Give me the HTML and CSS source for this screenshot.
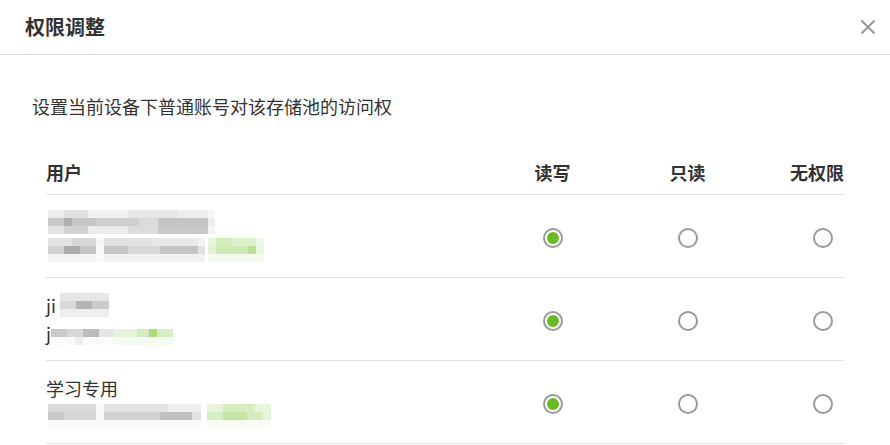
FILE: index.html
```html
<!DOCTYPE html>
<html lang="zh-CN">
<head>
  <meta charset="UTF-8">
  <title>权限调整</title>
  <link rel="stylesheet" href="styles.css">
</head>
<body>
  <div class="dialog">
    <div class="dialog-header">
      <h2 class="dialog-title">权限调整</h2>
      <button class="close-btn" aria-label="关闭">
        <svg width="16" height="16" viewBox="0 0 16 16">
          <path d="M1.5 1.5 L14.5 14.5 M14.5 1.5 L1.5 14.5" stroke="#999" stroke-width="2" fill="none"/>
        </svg>
      </button>
    </div>

    <div class="dialog-body">
      <p class="desc">设置当前设备下普通账号对该存储池的访问权</p>

      <div class="perm-table">
        <div class="perm-row perm-head">
          <div class="col-user">用户</div>
          <div class="col-opt">读写</div>
          <div class="col-opt">只读</div>
          <div class="col-opt col-last">无权限</div>
        </div>

        <div class="perm-row">
          <div class="col-user">
            <div class="user-line"><span class="mosaic m-name1"></span></div>
            <div class="user-line"><span class="mosaic m-acc1"></span><span class="mosaic m-green1"></span></div>
          </div>
          <div class="col-opt"><span class="radio checked"></span></div>
          <div class="col-opt"><span class="radio"></span></div>
          <div class="col-opt col-last"><span class="radio"></span></div>
        </div>

        <div class="perm-row">
          <div class="col-user">
            <div class="user-line">ji<span class="mosaic m-name2"></span></div>
            <div class="user-line">j<span class="mosaic m-acc2"></span><span class="mosaic m-green2"></span></div>
          </div>
          <div class="col-opt"><span class="radio checked"></span></div>
          <div class="col-opt"><span class="radio"></span></div>
          <div class="col-opt col-last"><span class="radio"></span></div>
        </div>

        <div class="perm-row">
          <div class="col-user">
            <div class="user-line">学习专用</div>
            <div class="user-line"><span class="mosaic m-acc3"></span><span class="mosaic m-green3"></span></div>
          </div>
          <div class="col-opt"><span class="radio checked"></span></div>
          <div class="col-opt"><span class="radio"></span></div>
          <div class="col-opt col-last"><span class="radio"></span></div>
        </div>
      </div>
    </div>
  </div>
</body>
</html>
```

FILE: styles.css
```css
body {
  margin: 0;
  background-color: #fff;
  color: #333;
  font-family: "Noto Sans CJK SC", "Noto Sans", sans-serif;
}

.dialog {
  width: 890px;
  height: 445px;
  overflow: hidden;
}

.dialog-header {
  height: 55px;
  border-bottom: 1px solid #e0e0e0;
  display: flex;
  align-items: center;
  justify-content: space-between;
  padding: 0 14px 0 25px;
  box-sizing: border-box;
}

.dialog-title {
  margin: 0;
  font-size: 20px;
  font-weight: bold;
  line-height: 28px;
  color: #333;
}

.close-btn {
  border: none;
  background: none;
  padding: 0;
  width: 16px;
  height: 16px;
  cursor: pointer;
}

.dialog-body {
  padding: 0 46px 0 32px;
}

.desc {
  margin: 39px 0 31px;
  font-size: 18px;
  line-height: 24px;
  color: #333;
}

.perm-table {
  margin-left: 14px;
}

.perm-row {
  display: grid;
  grid-template-columns: 1fr 135px 135px 89px;
  align-items: center;
  height: 82px;
  border-bottom: 1px solid #e0e0e0;
}

.perm-head {
  height: 45px;
  font-size: 18px;
  font-weight: bold;
  line-height: 24px;
}

.col-opt {
  text-align: center;
}

.col-last {
  text-align: right;
}

.col-last .radio {
  margin-right: 11px;
}

.col-user {
  font-size: 18px;
  line-height: 28px;
  color: #333;
}

.user-line {
  display: flex;
  align-items: center;
  height: 28px;
}

.radio {
  display: inline-block;
  width: 20px;
  height: 20px;
  border: 2px solid #9a9a9a;
  border-radius: 50%;
  box-sizing: border-box;
  vertical-align: middle;
  position: relative;
}

.radio.checked::after {
  content: "";
  position: absolute;
  left: 2px;
  top: 2px;
  width: 12px;
  height: 12px;
  border-radius: 50%;
  background-color: #67bd1d;
}

/* pixelated (hidden) account info */
.mosaic {
  display: inline-block;
  height: 24px;
  background-repeat: no-repeat;
  background-size: 100% 8px;
}

.m-name1 {
  width: 167px;
  margin-left: 2px;
  background-image:
    linear-gradient(to right, #ececec 0 16px, #e2e2e2 16px 40px, #f2f2f2 40px 80px, #e6e6e6 80px 130px, #ececec 130px 160px, #f7f7f7 160px),
    linear-gradient(to right, #c9c9c9 0 16px, #aeaeae 16px 24px, #c6c6c6 24px 48px, #cfcfcf 48px 90px, #dadada 90px 110px, #c4c4c4 110px 160px, #ececec 160px),
    linear-gradient(to right, #e2e2e2 0 16px, #d2d2d2 16px 40px, #ececec 40px 80px, #dcdcdc 80px 110px, #c8c8c8 110px 160px, #f4f4f4 160px);
  background-position: 0 0, 0 8px, 0 16px;
}

.m-acc1 {
  width: 157px;
  margin-left: 2px;
  background-image:
    linear-gradient(to right, #e4e4e4 0 24px, #d8d8d8 24px 48px, #f6f6f6 48px 56px, #e2e2e2 56px 104px, #e8e8e8 104px 150px, #f2f2f2 150px),
    linear-gradient(to right, #d2d2d2 0 16px, #ababab 16px 32px, #c4c4c4 32px 48px, #fafafa 48px 56px, #c6c6c6 56px 80px, #d8d8d8 80px 112px, #c4c4c4 112px 150px, #e2e2e2 150px),
    linear-gradient(to right, #f4f4f4 0 48px, #fafafa 48px 56px, #f2f2f2 56px 157px);
  background-position: 0 0, 0 8px, 0 16px;
}

.m-green1 {
  width: 56px;
  margin-left: 3px;
  background-image:
    linear-gradient(to right, #e8f5dd 0 8px, #d2edbb 8px 24px, #dcf0cb 24px 48px, #eef8e6 48px),
    linear-gradient(to right, #e2f2d5 0 8px, #cdeab4 8px 40px, #b9e196 40px 48px, #eaf6df 48px),
    linear-gradient(to right, #f4faee 0 56px);
  background-position: 0 0, 0 8px, 0 16px;
}

.m-name2 {
  width: 49px;
  margin-left: 4px;
  background-image:
    linear-gradient(to right, #e6e6e6 0 49px),
    linear-gradient(to right, #d8d8d8 0 16px, #b4b4b4 16px 32px, #cacaca 32px 49px),
    linear-gradient(to right, #eeeeee 0 49px);
  background-position: 0 0, 0 8px, 0 16px;
}

.m-acc2 {
  width: 62px;
  background-image:
    linear-gradient(to right, #fff 0 62px),
    linear-gradient(to right, #c9c9c9 0 16px, #d8d8d8 16px 32px, #bcbcbc 32px 48px, #e6e6e6 48px),
    linear-gradient(to right, #fafafa 0 24px, #eeeeee 24px 32px, #fafafa 32px);
  background-position: 0 0, 0 8px, 0 16px;
}

.m-green2 {
  width: 60px;
  background-image:
    linear-gradient(to right, #fff 0 60px),
    linear-gradient(to right, #e6f4da 0 24px, #d3ecbe 24px 36px, #acdb7e 36px 44px, #d8efc4 44px),
    linear-gradient(to right, #f6fbf1 0 60px);
  background-position: 0 0, 0 8px, 0 16px;
}

.m-acc3 {
  width: 153px;
  margin-left: 2px;
  background-image:
    linear-gradient(to right, #dadada 0 48px, #fafafa 48px 56px, #e4e4e4 56px 120px, #eeeeee 120px),
    linear-gradient(to right, #c9c9c9 0 16px, #d6d6d6 16px 48px, #fafafa 48px 56px, #d2d2d2 56px 112px, #c0c0c0 112px 144px, #e2e2e2 144px),
    linear-gradient(to right, #fafafa 0 153px);
  background-position: 0 0, 0 8px, 0 16px;
}

.m-green3 {
  width: 64px;
  margin-left: 6px;
  background-image:
    linear-gradient(to right, #e6f4da 0 16px, #d6eec2 16px 48px, #e8f5dd 48px),
    linear-gradient(to right, #d8efc4 0 16px, #c4e5a6 16px 40px, #d4ecbd 40px 56px, #e6f4da 56px),
    linear-gradient(to right, #f8fcf4 0 64px);
  background-position: 0 0, 0 8px, 0 16px;
}
```
